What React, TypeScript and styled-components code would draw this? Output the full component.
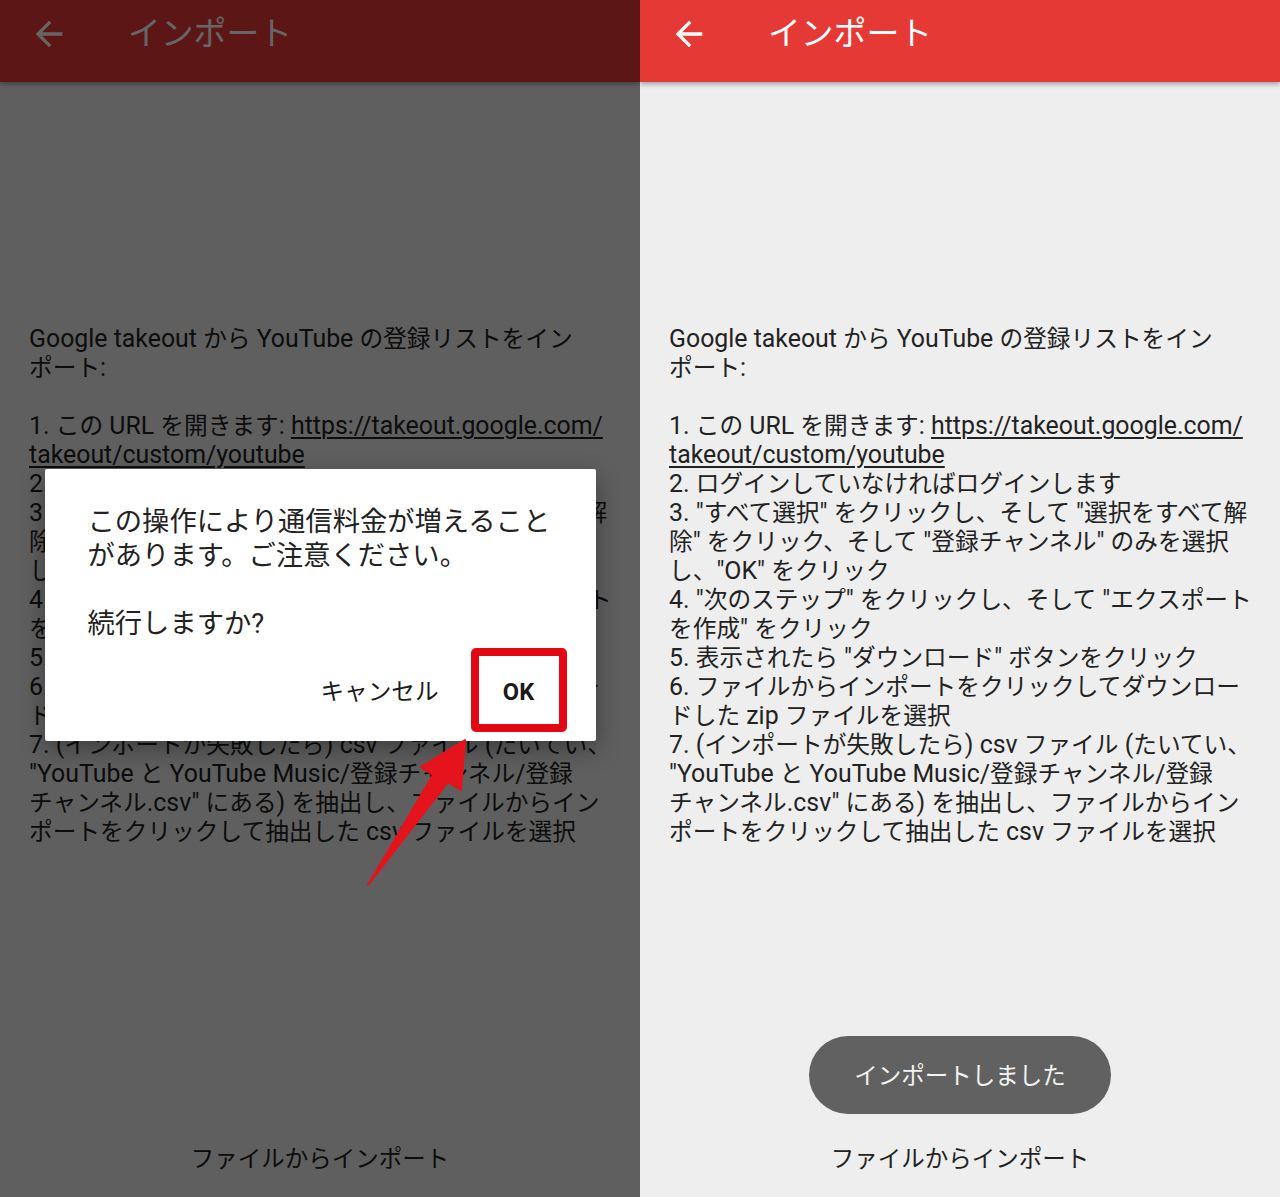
import React from "react";
import styled, { createGlobalStyle } from "styled-components";

const GlobalStyle = createGlobalStyle`
  body {
    margin: 0;
    background: #eeeeee;
    font-family: Roboto, "Noto Sans CJK JP", sans-serif;
  }
`;

const Page = styled.div`
  position: relative;
  display: flex;
  width: 1280px;
  height: 1197px;
  overflow: hidden;
`;

const Screen = styled.div`
  position: relative;
  display: flex;
  flex-direction: column;
  width: 640px;
  height: 1197px;
  background: #eeeeee;
  overflow: hidden;
`;

const AppBar = styled.header`
  position: relative;
  z-index: 1;
  flex-shrink: 0;
  display: flex;
  align-items: center;
  height: 82px;
  padding: 0 0 15px 29px;
  box-sizing: border-box;
  background: #e53935;
  box-shadow: 0 2px 5px rgba(0, 0, 0, 0.35);
`;

const BackButton = styled.button`
  display: flex;
  padding: 0;
  border: 0;
  background: none;
  color: #ffffff;
  cursor: pointer;
`;

const Title = styled.h1`
  margin: 0 0 0 59px;
  font-size: 32.8px;
  font-weight: 400;
  line-height: 40px;
  color: #ffffff;
`;

const Instructions = styled.div`
  margin-top: 242px;
  padding-left: 29px;
  font-size: 23.7px;
  line-height: 29px;
  color: #222222;
`;

const Line = styled.div`
  height: 29px;
  white-space: nowrap;
`;

// Latin runs render a touch wider than the CJK glyphs next to them
const Latin = styled.span`
  font-size: 1.05em;
  line-height: 29px;
`;

const Link = styled.a`
  color: inherit;
  text-decoration: underline;
  text-underline-offset: 3px;
  text-decoration-thickness: 1.5px;
`;

const Spacer = styled.div`
  flex: 1;
`;

const FooterButton = styled.button`
  align-self: center;
  margin-bottom: 7px;
  padding: 16px 32px;
  border: 0;
  background: none;
  font-family: inherit;
  font-size: 23.5px;
  line-height: 29px;
  color: #222222;
`;

const Toast = styled.div`
  position: absolute;
  left: 50%;
  bottom: 83px;
  transform: translateX(-50%);
  display: flex;
  align-items: center;
  justify-content: center;
  width: 302px;
  height: 78px;
  padding-bottom: 3px;
  box-sizing: border-box;
  border-radius: 39px;
  background: #616161;
  color: #f2f2f2;
  font-size: 23.5px;
`;

const Overlay = styled.div`
  position: absolute;
  inset: 0;
  z-index: 2;
  display: flex;
  align-items: center;
  justify-content: center;
  padding-top: 13px;
  background: rgba(0, 0, 0, 0.6);
`;

const Dialog = styled.div`
  width: 551px;
  height: 272px;
  box-sizing: border-box;
  padding: 36px 29px 9px 43px;
  background: #ffffff;
  border-radius: 2px;
  box-shadow: 0 8px 24px rgba(0, 0, 0, 0.35);
`;

const Message = styled.div`
  font-size: 27.3px;
  line-height: 34px;
  color: #222222;
`;

const Actions = styled.div`
  display: flex;
  align-items: center;
  justify-content: flex-end;
  gap: 32px;
  margin-top: 7px;
`;

const DialogButton = styled.button<{ $highlight?: boolean }>`
  display: flex;
  align-items: center;
  justify-content: center;
  padding: 5px 0 0;
  background: #ffffff;
  font-family: inherit;
  font-size: 23.6px;
  line-height: 29px;
  color: #1a1a1a;
  font-weight: ${(p) => (p.$highlight ? 700 : 400)};
  border: ${(p) => (p.$highlight ? "8px solid #e30613" : "0")};
  border-radius: ${(p) => (p.$highlight ? "5px" : "0")};
  width: ${(p) => (p.$highlight ? "96px" : "auto")};
  height: ${(p) => (p.$highlight ? "84px" : "auto")};
  box-sizing: border-box;
`;

const Pointer = styled.svg`
  position: absolute;
  left: 360px;
  top: 730px;
  z-index: 3;
`;

const ArrowBack = () => (
  <svg width="40" height="40" viewBox="0 0 24 24" fill="currentColor">
    <path d="M20 11H7.83l5.59-5.59L12 4l-8 8 8 8 1.41-1.41L7.83 13H20v-2z" />
  </svg>
);

const splitRuns = (text: string) =>
  text.split(/([\u0020-\u024F]+)/).filter(Boolean).map((run, i) =>
    /^[\u0020-\u024F]+$/.test(run) ? <Latin key={i}>{run}</Latin> : <span key={i}>{run}</span>
  );

type Part = string | { link: string };

const lines: Part[][] = [
  ["Google takeout から YouTube の登録リストをイン"],
  ["ポート:"],
  [],
  ["1. この URL を開きます: ", { link: "https://takeout.google.com/" }],
  [{ link: "takeout/custom/youtube" }],
  ["2. ログインしていなければログインします"],
  ['3. "すべて選択" をクリックし、そして "選択をすべて解'],
  ['除" をクリック、そして "登録チャンネル" のみを選択'],
  ['し、"OK" をクリック'],
  ['4. "次のステップ" をクリックし、そして "エクスポート'],
  ['を作成" をクリック'],
  ['5. 表示されたら "ダウンロード" ボタンをクリック'],
  ["6. ファイルからインポートをクリックしてダウンロー"],
  ["ドした zip ファイルを選択"],
  ["7. (インポートが失敗したら) csv ファイル (たいてい、"],
  ['"YouTube と YouTube Music/登録チャンネル/登録'],
  ['チャンネル.csv" にある) を抽出し、ファイルからイン'],
  ["ポートをクリックして抽出した csv ファイルを選択"],
];

const ImportScreen = ({ children }: { children?: React.ReactNode }) => (
  <Screen>
    <AppBar>
      <BackButton aria-label="戻る">
        <ArrowBack />
      </BackButton>
      <Title>インポート</Title>
    </AppBar>
    <Instructions>
      {lines.map((parts, i) => (
        <Line key={i}>
          {parts.map((p, j) =>
            typeof p === "string" ? (
              <React.Fragment key={j}>{splitRuns(p)}</React.Fragment>
            ) : (
              <Link key={j} href="#">
                <Latin>{p.link}</Latin>
              </Link>
            )
          )}
        </Line>
      ))}
    </Instructions>
    <Spacer />
    <FooterButton>ファイルからインポート</FooterButton>
    {children}
  </Screen>
);

export default function App() {
  return (
    <Page>
      <GlobalStyle />
      <ImportScreen>
        <Overlay>
          <Dialog>
            <Message>
              この操作により通信料金が増えること
              <br />
              があります。ご注意ください。
              <br />
              <br />
              続行しますか?
            </Message>
            <Actions>
              <DialogButton>キャンセル</DialogButton>
              <DialogButton $highlight>OK</DialogButton>
            </Actions>
          </Dialog>
        </Overlay>
      </ImportScreen>
      <ImportScreen>
        <Toast>インポートしました</Toast>
      </ImportScreen>
      <Pointer width="115" height="160" viewBox="360 730 115 160">
        <polygon
          points="368,885 433,775 421,767 465,740 461,790 448,782"
          fill="#e5141c"
          stroke="#e5141c"
          strokeWidth="2"
          strokeLinejoin="round"
        />
      </Pointer>
    </Page>
  );
}
